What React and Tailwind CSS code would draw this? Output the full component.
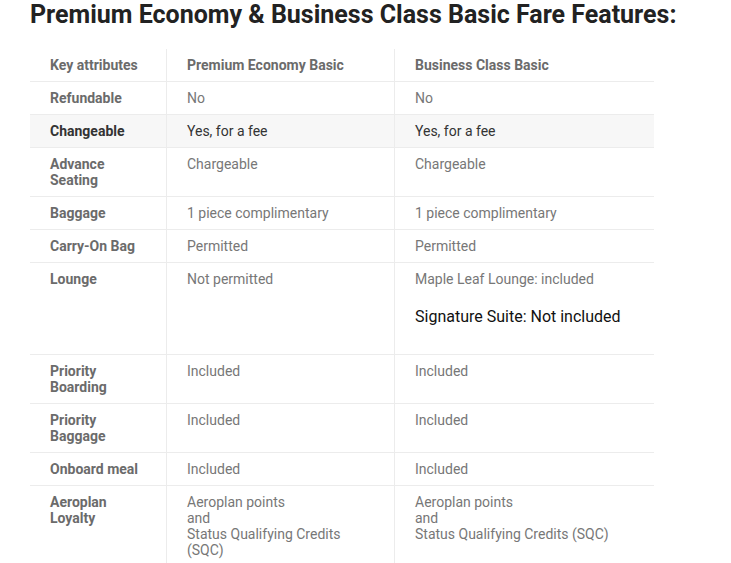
import React from 'react';

const rows = [
  { key: 'Refundable', pe: 'No', bc: 'No' },
  { key: 'Changeable', pe: 'Yes, for a fee', bc: 'Yes, for a fee', active: true },
  { key: 'Advance Seating', pe: 'Chargeable', bc: 'Chargeable', narrow: true },
  { key: 'Baggage', pe: '1 piece complimentary', bc: '1 piece complimentary' },
  { key: 'Carry-On Bag', pe: 'Permitted', bc: 'Permitted' },
  {
    key: 'Lounge',
    pe: 'Not permitted',
    bc: (
      <>
        <div>Maple Leaf Lounge: included</div>
        <p className="mt-5 mb-[19px] text-base leading-5 text-[#111]">Signature Suite: Not included</p>
      </>
    ),
  },
  { key: 'Priority Boarding', pe: 'Included', bc: 'Included', narrow: true },
  { key: 'Priority Baggage', pe: 'Included', bc: 'Included', narrow: true },
  { key: 'Onboard meal', pe: 'Included', bc: 'Included' },
  {
    key: 'Aeroplan Loyalty',
    pe: (
      <>
        Aeroplan points<br />and<br />Status Qualifying Credits (SQC)
      </>
    ),
    bc: (
      <>
        Aeroplan points<br />and<br />Status Qualifying Credits (SQC)
      </>
    ),
    narrow: true,
    last: true,
  },
];

const Cell = ({ children, first, className = '' }) => (
  <div className={`px-5 pt-2 pb-2 ${first ? '' : 'border-l border-[#ececec]'} ${className}`}>
    {children}
  </div>
);

export default function App() {
  return (
    <div className="bg-white min-h-[563px] text-sm leading-4" style={{ fontFamily: 'Roboto, "Liberation Sans", sans-serif' }}>
      <h1 className="pl-[30px] pt-[1px] text-[25px] leading-7 font-bold text-[#222]">
        Premium Economy &amp; Business Class Basic Fare Features:
      </h1>
      <div className="ml-[30px] mt-[20px] w-[624px]">
        <div className="grid grid-cols-[136px_228px_260px] border-b border-[#ececec] font-bold text-[#6b6b6b]">
          <Cell first>Key attributes</Cell>
          <Cell>Premium Economy Basic</Cell>
          <Cell>Business Class Basic</Cell>
        </div>
        {rows.map((r) => (
          <div
            key={r.key}
            className={`grid grid-cols-[136px_228px_260px] ${r.last ? 'pb-2' : 'border-b border-[#ececec]'} ${
              r.active ? 'bg-[#f7f7f7] text-[#333]' : 'text-[#777]'
            }`}
          >
            <Cell first className={`font-bold ${r.active ? 'text-[#333]' : 'text-[#6b6b6b]'} ${r.narrow ? 'pr-10' : ''}`}>
              {r.key}
            </Cell>
            <Cell>{r.pe}</Cell>
            <Cell>{r.bc}</Cell>
          </div>
        ))}
      </div>
    </div>
  );
}
